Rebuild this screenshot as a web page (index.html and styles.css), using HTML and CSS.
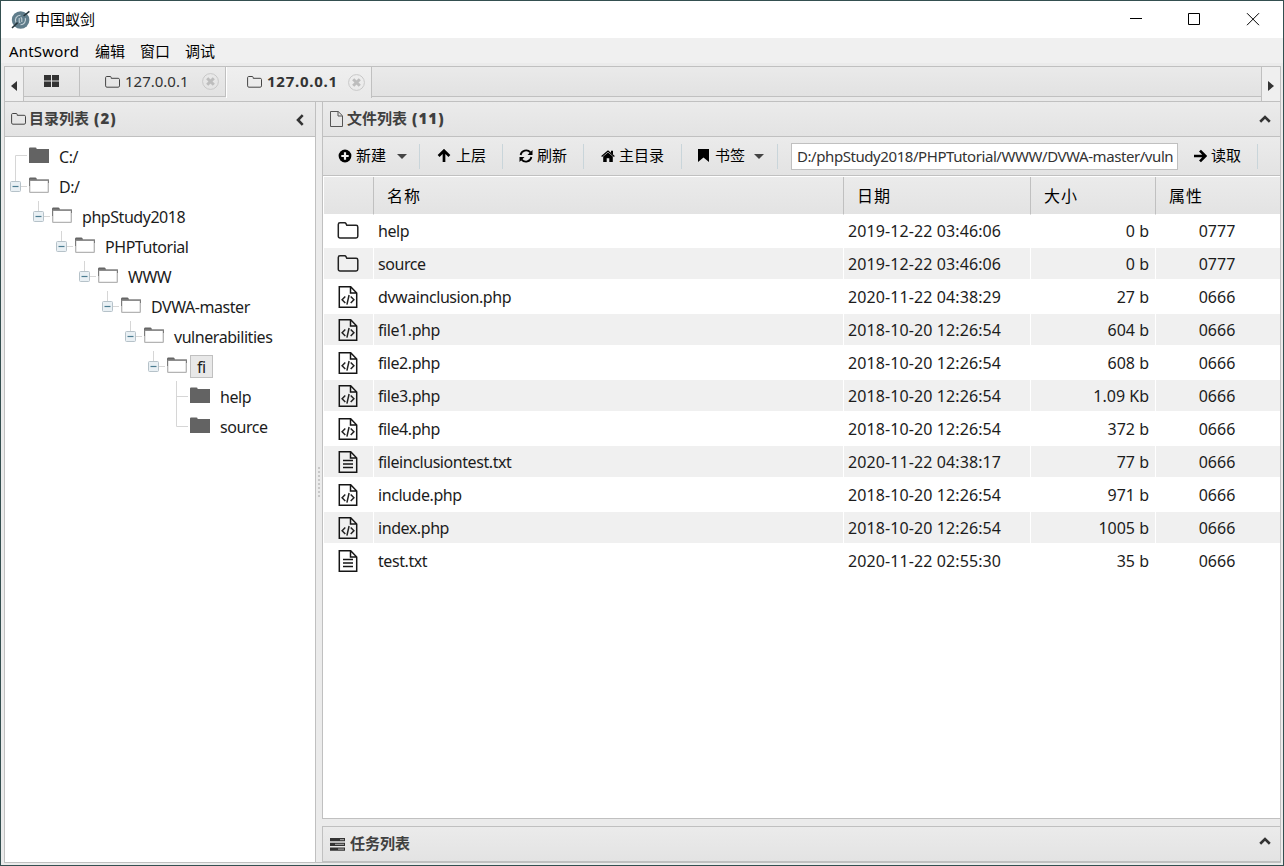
FILE: index.html
```html
<!DOCTYPE html>
<html lang="zh-CN">
<head>
    <meta charset="UTF-8">
    <title>中国蚁剑</title>
    <link rel="stylesheet" href="styles.css">
</head>
<body>

<!-- Icons -->
<svg class="defs">
    <symbol id="i-folder-o" viewBox="0 0 16 14">
        <path d="M1.6 1.5h3.6c.6 0 1 .4 1 1v.8h7c.8 0 1.3.5 1.3 1.3v6.3c0 .8-.5 1.3-1.3 1.3H1.9c-.8 0-1.3-.5-1.3-1.3V2.6c0-.6.4-1.1 1-1.1z" fill="none" stroke="currentColor"/>
    </symbol>
    <symbol id="i-close" viewBox="0 0 17 17">
        <circle cx="8.5" cy="8.5" r="7.9" fill="none" stroke="#c8c8c8"/>
        <path d="M5.2 5.2l6.6 6.6M11.8 5.2l-6.6 6.6" stroke="#bdbdbd" stroke-width="3"/>
    </symbol>
    <symbol id="i-up" viewBox="0 0 12 8">
        <path d="M1.2 6.7L6 2l4.8 4.7" fill="none" stroke="#333" stroke-width="2.6"/>
    </symbol>
    <symbol id="i-arrow" viewBox="0 0 14 14">
        <path d="M1 7h11M7 1.6L12.3 7 7 12.4" fill="none" stroke="currentColor" stroke-width="2.7"/>
    </symbol>
    <symbol id="t-minus" viewBox="0 0 19 30">
        <path d="M5.5 0v10M11 15.5h6" stroke="#d6d6d6" fill="none"/>
        <rect x=".5" y="10.5" width="10" height="10" rx="1" fill="#e9f0f4" stroke="#b6c2c9"/>
        <path d="M2.5 15.5h6" stroke="#4b7c91" stroke-width="1.2"/>
    </symbol>
    <symbol id="t-top" viewBox="0 0 19 30">
        <path d="M17 14.5H5.5V30" stroke="#d6d6d6" fill="none"/>
    </symbol>
    <symbol id="t-mid" viewBox="0 0 19 30">
        <path d="M5.5 0v30M5.5 15.5H17" stroke="#d6d6d6" fill="none"/>
    </symbol>
    <symbol id="t-end" viewBox="0 0 19 30">
        <path d="M5.5 0v15.5H17" stroke="#d6d6d6" fill="none"/>
    </symbol>
    <symbol id="f-closed" viewBox="0 0 20 30">
        <path d="M0 7.5Q0 6.5 1 6.5h5.5q1 0 1.2 1.4H20V22H0z" fill="#636363"/>
    </symbol>
    <symbol id="f-open" viewBox="0 0 20 30">
        <path d="M0 8q0-1.5 1-1.5h5.5q1 0 1.5 1.9H20v2H0z" fill="#666"/>
        <rect x=".7" y="9.4" width="18.6" height="12" rx=".6" fill="#fff" stroke="#b4b4b4" stroke-width="1.3"/>
        <path d="M.5 15V9.2h19V12" fill="none" stroke="#7b7b7b"/>
    </symbol>
    <symbol id="g-folder" viewBox="0 0 22 22">
        <path d="M3 2.7h4.7c.7 0 1 .3 1.3.9l.8 1.7h9.3c1 0 1.7.7 1.7 1.7v9.3c0 1-.7 1.7-1.7 1.7H3c-1 0-1.7-.7-1.7-1.7V4.4c0-1 .7-1.7 1.7-1.7z" fill="none" stroke="#222" stroke-width="1.5"/>
    </symbol>
    <symbol id="g-page" viewBox="0 0 20 22">
        <path d="M1.3.8h11.4L18.7 7v14.2H1.3zM12.5 1v6h6" fill="none" stroke="#151515" stroke-width="1.5"/>
    </symbol>
    <symbol id="g-code" viewBox="0 0 20 22">
        <use href="#g-page"/>
        <path d="M7.3 10.5l-3.2 3.3 3.2 3.3M12.7 10.5l3.2 3.3-3.2 3.3M11.1 9L8.9 18.7" fill="none" stroke="#222" stroke-width="1.5"/>
    </symbol>
    <symbol id="g-text" viewBox="0 0 20 22">
        <use href="#g-page"/>
        <path d="M5 9.6h10M5 13.1h10M5 16.6h10" stroke="#151515" stroke-width="1.5"/>
    </symbol>
</svg>

<div class="window">
    <div class="titlebar">
        <svg class="logo" viewBox="0 0 20 20">
            <circle cx="10.6" cy="10" r="8.8" fill="#607d8b"/>
            <path d="M6 12.6a5 5 0 0 1 4.5-7.4M15.2 8a5 5 0 0 1-4.7 6.8M9.2 8v3.5q0 1 1.2 1M11.8 12V8.7Q11.8 7.6 10.6 7.6" fill="none" stroke="#c3d0d6" stroke-width="1.1"/>
            <path d="M19.4 1.4L13.6 6M7.6 12.6L2 18" stroke="#25343b" stroke-width="1.5" fill="none"/>
        </svg>
        <span class="title">中国蚁剑</span>
        <svg class="win-buttons" width="130" height="20" viewBox="0 0 130 20">
            <path d="M0 9.5h12M58.5 4.5h11v11h-11zM117 4.2l12 12M129 4.2l-12 12" fill="none" stroke="#000"/>
        </svg>
    </div>
    <div class="menu">
        <span class="menu-app">AntSword</span><span>编辑</span><span>窗口</span><span>调试</span>
    </div>

    <div class="app">
        <!-- Tabs -->
        <div class="tabbar">
            <div class="tab-arrow left"><svg width="6" height="10"><path d="M6 0v10L0 5z" fill="#333"/></svg></div>
            <div class="tabs">
                <div class="tab home">
                    <svg width="15" height="12"><path d="M0 0h7v5.4H0zM8 0h7v5.4H8zM0 6.6h7V12H0zM8 6.6h7V12H8z" fill="#333"/></svg>
                </div>
                <div class="tab">
                    <svg class="tab-icon"><use href="#i-folder-o"/></svg><span>127.0.0.1</span>
                    <svg class="tab-close"><use href="#i-close"/></svg>
                </div>
                <div class="tab active">
                    <svg class="tab-icon"><use href="#i-folder-o"/></svg><span>127.0.0.1</span>
                    <svg class="tab-close"><use href="#i-close"/></svg>
                </div>
                <div class="tab-rest"></div>
            </div>
            <div class="tab-arrow right"><svg width="6" height="10"><path d="M0 0v10l6-5z" fill="#333"/></svg></div>
        </div>

        <div class="layout">
            <!-- Directory tree -->
            <div class="panel sidebar">
                <div class="panel-head">
                    <svg class="tab-icon"><use href="#i-folder-o"/></svg>
                    <span>目录列表 <b>(2)</b></span>
                    <svg class="collapse" width="8" height="12"><path d="M6.7 1.2L2 6l4.7 4.8" fill="none" stroke="#333" stroke-width="2.6"/></svg>
                </div>
                <div class="tree">
                    <div class="node"><svg class="line"><use href="#t-top"/></svg><svg class="dir"><use href="#f-closed"/></svg><span>C:/</span></div>
                    <div class="node"><svg class="line"><use href="#t-minus"/></svg><svg class="dir"><use href="#f-open"/></svg><span>D:/</span></div>
                    <div class="branch">
                        <div class="node"><svg class="line"><use href="#t-minus"/></svg><svg class="dir"><use href="#f-open"/></svg><span>phpStudy2018</span></div>
                        <div class="branch">
                            <div class="node"><svg class="line"><use href="#t-minus"/></svg><svg class="dir"><use href="#f-open"/></svg><span>PHPTutorial</span></div>
                            <div class="branch">
                                <div class="node"><svg class="line"><use href="#t-minus"/></svg><svg class="dir"><use href="#f-open"/></svg><span>WWW</span></div>
                                <div class="branch">
                                    <div class="node"><svg class="line"><use href="#t-minus"/></svg><svg class="dir"><use href="#f-open"/></svg><span>DVWA-master</span></div>
                                    <div class="branch">
                                        <div class="node"><svg class="line"><use href="#t-minus"/></svg><svg class="dir"><use href="#f-open"/></svg><span>vulnerabilities</span></div>
                                        <div class="branch">
                                            <div class="node"><svg class="line"><use href="#t-minus"/></svg><svg class="dir"><use href="#f-open"/></svg><span class="selected">fi</span></div>
                                            <div class="branch">
                                                <div class="node"><svg class="line"><use href="#t-mid"/></svg><svg class="dir"><use href="#f-closed"/></svg><span>help</span></div>
                                                <div class="node"><svg class="line"><use href="#t-end"/></svg><svg class="dir"><use href="#f-closed"/></svg><span>source</span></div>
                                            </div>
                                        </div>
                                    </div>
                                </div>
                            </div>
                        </div>
                    </div>
                </div>
            </div>

            <div class="splitter"><div class="grip"></div></div>

            <div class="main">
                <!-- File list -->
                <div class="panel files">
                    <div class="panel-head">
                        <svg class="page-icon" width="13" height="16"><path d="M.5.5h7.7l4.3 4.3v10.7H.5zM8 .5V5h4.5" fill="none" stroke="#555"/></svg>
                        <span>文件列表 <b>(11)</b></span>
                        <svg class="collapse" width="12" height="8"><use href="#i-up"/></svg>
                    </div>
                    <div class="toolbar">
                        <div class="tool new">
                            <svg width="14" height="14"><circle cx="7" cy="7" r="6.4"/><path d="M7 3.3v7.4M3.3 7h7.4" stroke="#eee" stroke-width="2.2"/></svg>
                            <span>新建</span><i class="caret"></i>
                        </div>
                        <div class="tool up">
                            <svg class="rotated" width="14" height="14"><use href="#i-arrow"/></svg><span>上层</span>
                        </div>
                        <div class="tool refresh">
                            <svg width="14" height="14"><path d="M1.6 6A5.6 5.6 0 0 1 11.4 3.4M12.4 8A5.6 5.6 0 0 1 2.6 10.6" fill="none" stroke="#000" stroke-width="1.8"/><path d="M13.5 1v5h-5zM.5 13V8h5z"/></svg><span>刷新</span>
                        </div>
                        <div class="tool home-dir">
                            <svg width="14" height="14"><path d="M7 3.6l4.8 4V13H8.3V9.3H5.7V13H2.2V7.6z"/><path d="M.6 7.4L7 2.1l6.4 5.3" fill="none" stroke="#000" stroke-width="1.3"/><path d="M10 1.7h2v4l-2-1.7z"/></svg><span>主目录</span>
                        </div>
                        <div class="tool mark">
                            <svg width="11" height="13"><path d="M0 0h11v13L5.5 8.5 0 13z"/></svg>
                            <span>书签</span><i class="caret"></i>
                        </div>
                        <div class="path">D:/phpStudy2018/PHPTutorial/WWW/DVWA-master/vuln</div>
                        <div class="tool read">
                            <svg width="14" height="14"><use href="#i-arrow"/></svg><span>读取</span>
                        </div>
                    </div>
                    <table class="grid">
                        <thead>
                            <tr><th class="c-icon"></th><th class="c-name">名称</th><th class="c-date">日期</th><th class="c-size">大小</th><th class="c-attr">属性</th></tr>
                        </thead>
                        <tbody>
                            <tr><td><svg class="fold"><use href="#g-folder"/></svg></td><td>help</td><td>2019-12-22 03:46:06</td><td>0 b</td><td>0777</td></tr>
                            <tr><td><svg class="fold"><use href="#g-folder"/></svg></td><td>source</td><td>2019-12-22 03:46:06</td><td>0 b</td><td>0777</td></tr>
                            <tr><td><svg><use href="#g-code"/></svg></td><td>dvwainclusion.php</td><td>2020-11-22 04:38:29</td><td>27 b</td><td>0666</td></tr>
                            <tr><td><svg><use href="#g-code"/></svg></td><td>file1.php</td><td>2018-10-20 12:26:54</td><td>604 b</td><td>0666</td></tr>
                            <tr><td><svg><use href="#g-code"/></svg></td><td>file2.php</td><td>2018-10-20 12:26:54</td><td>608 b</td><td>0666</td></tr>
                            <tr><td><svg><use href="#g-code"/></svg></td><td>file3.php</td><td>2018-10-20 12:26:54</td><td>1.09 Kb</td><td>0666</td></tr>
                            <tr><td><svg><use href="#g-code"/></svg></td><td>file4.php</td><td>2018-10-20 12:26:54</td><td>372 b</td><td>0666</td></tr>
                            <tr><td><svg><use href="#g-text"/></svg></td><td>fileinclusiontest.txt</td><td>2020-11-22 04:38:17</td><td>77 b</td><td>0666</td></tr>
                            <tr><td><svg><use href="#g-code"/></svg></td><td>include.php</td><td>2018-10-20 12:26:54</td><td>971 b</td><td>0666</td></tr>
                            <tr><td><svg><use href="#g-code"/></svg></td><td>index.php</td><td>2018-10-20 12:26:54</td><td>1005 b</td><td>0666</td></tr>
                            <tr><td><svg><use href="#g-text"/></svg></td><td>test.txt</td><td>2020-11-22 02:55:30</td><td>35 b</td><td>0666</td></tr>
                        </tbody>
                    </table>
                </div>

                <!-- Task list -->
                <div class="panel tasks">
                    <div class="panel-head">
                        <svg class="task-icon" width="15" height="13"><path d="M0 0h15v3.3H0zM0 4.7h15V8H0zM0 9.4h15v3.3H0z" fill="#333"/><path d="M10 1h4v1.3h-4zM5 5.7h9V7H5zM8 10.4h6v1.3H8z" fill="#999"/></svg>
                        <span>任务列表</span>
                        <svg class="collapse" width="12" height="8"><use href="#i-up"/></svg>
                    </div>
                </div>
            </div>
        </div>
    </div>
</div>

</body>
</html>
```
FILE: styles.css
```css
* {
    box-sizing: border-box;
}
body {
    margin: 0;
    font-family: "Noto Sans", "Noto Sans CJK SC", sans-serif;
    font-size: 16px;
    color: #1c1c1c;
}
svg {
    display: block;
    flex: none;
}
.defs {
    display: none;
}
.window {
    display: flex;
    flex-direction: column;
    width: 1284px;
    height: 866px;
    border: 1px solid #344f50;
    background: #ebebeb;
    overflow: hidden;
}

/* Title and menu */
.titlebar {
    display: flex;
    align-items: center;
    height: 37px;
    padding: 0 23px 0 9px;
    background: #fff;
    color: #000;
}
.logo {
    width: 20px;
    height: 20px;
}
.title {
    margin-left: 5px;
    padding-bottom: 2px;
    font-size: 15px;
    font-family: "Noto Sans CJK SC", sans-serif;
}
.win-buttons {
    margin-left: auto;
    margin-bottom: 2px;
}
.menu {
    display: flex;
    gap: 15px;
    height: 25px;
    line-height: 26px;
    padding-left: 8px;
    background: #f0f0f0;
    color: #000;
    font-size: 15px;
}
.menu-app {
    width: 71px;
    letter-spacing: .2px;
}

.app {
    display: flex;
    flex-direction: column;
    flex: 1;
    margin: 3px 2px 2px 3px;
    border: 1px solid #c0c0c0;
}

/* Tabs */
.tabbar {
    display: flex;
    height: 35px;
    border-bottom: 1px solid #c0c0c0;
    background: #e9e9e9;
}
.tab-arrow {
    display: flex;
    align-items: center;
    justify-content: center;
    width: 19px;
    padding-top: 3px;
    background: #efefef;
}
.tab-arrow.left {
    border-right: 1px solid #c0c0c0;
}
.tab-arrow.right {
    border-left: 1px solid #c0c0c0;
}
.tabs {
    display: flex;
    flex: 1;
}
.tab, .tab-rest {
    height: 30px;
    border-bottom: 1px solid #c0c0c0;
    background: linear-gradient(#eaeaea, #e2e2e2);
}
.tab {
    display: flex;
    align-items: center;
    width: 146px;
    padding-left: 25px;
    border-right: 1px solid #c0c0c0;
    color: #333;
    font-size: 15px;
}
.tab-rest {
    flex: 1;
}
.tab.home {
    width: 56px;
    padding: 0 0 1px 20px;
}
.tab.active {
    height: 31px;
    padding-left: 20px;
    padding-bottom: 1px;
    border-bottom: 0;
    border-left: 1px solid #fff;
    background: linear-gradient(#efefef, #e9e9e9);
    font-weight: bold;
}
.tab.active span {
    letter-spacing: .75px;
}
.tab-icon {
    width: 16px;
    height: 14px;
    color: #444;
}
.tab span {
    width: 73px;
    margin-left: 4px;
    padding-bottom: 2px;
}
.tab-close {
    width: 17px;
    height: 17px;
    margin-left: 4px;
}
.tab.active .tab-close {
    margin-left: 8px;
}

/* Panels */
.layout {
    display: flex;
    flex: 1;
}
.panel-head {
    display: flex;
    align-items: center;
    height: 35px;
    padding: 0 9px 1px 5px;
    border-bottom: 1px solid #c0c0c0;
    background: linear-gradient(#ebebeb, #e3e3e3);
    color: #404040;
    font-size: 15px;
    font-weight: bold;
}
.panel-head span {
    margin-left: 4px;
    padding-bottom: 3px;
}
.panel-head b {
    margin-left: 1px;
    letter-spacing: 1.1px;
}
.collapse {
    margin-left: auto;
}
.sidebar {
    width: 311px;
    border-right: 1px solid #c0c0c0;
    background: #fff;
}
.sidebar .panel-head {
    padding-left: 6px;
}
.sidebar .panel-head span {
    margin-left: 2px;
}
.sidebar .collapse {
    margin-right: 2px;
    margin-top: 2px;
}
.splitter {
    display: flex;
    align-items: center;
    justify-content: center;
    width: 6px;
}
.grip {
    width: 2px;
    height: 30px;
    background: repeating-linear-gradient(#c8c8c8 0 2px, #ebebeb 2px 4px);
}
.main {
    display: flex;
    flex-direction: column;
    flex: 1;
    min-width: 0;
}
.files {
    height: 717px;
    border-left: 1px solid #c0c0c0;
    border-bottom: 1px solid #c0c0c0;
    background: #fff;
}
.files .panel-head, .tasks .panel-head {
    padding-left: 7px;
}
.tasks {
    margin-top: 7px;
    border-top: 1px solid #c0c0c0;
    border-left: 1px solid #c0c0c0;
}

/* Tree */
.tree {
    padding: 4px 0 0 5px;
}
.branch {
    padding-left: 23px;
}
.node {
    display: flex;
    align-items: center;
    height: 30px;
}
.line {
    width: 19px;
    height: 30px;
}
.dir {
    width: 20px;
    height: 30px;
}
.node span {
    height: 23px;
    margin-left: 3px;
    padding: 0 5px 0 6px;
    border: 1px solid transparent;
    line-height: 22px;
    letter-spacing: -.45px;
}
.node .selected {
    padding-right: 6px;
    background: #e8e8e8;
    border-color: #c0c0c0;
}

/* Toolbar */
.toolbar {
    display: flex;
    align-items: center;
    height: 39px;
    padding-left: 15px;
    border-bottom: 1px solid #c0c0c0;
    background: linear-gradient(#ebebeb, #e3e3e3);
    color: #000;
    font-size: 15px;
}
.tool {
    display: flex;
    align-items: center;
    height: 25px;
    padding-bottom: 1px;
    border-right: 1px solid #c9d5da;
}
.tool span {
    margin-left: 4px;
    padding-bottom: 3px;
}
.tool.new {
    width: 82px;
}
.tool.up {
    width: 83px;
    padding-left: 17px;
}
.tool.up span {
    margin-left: 5px;
}
.tool.refresh {
    width: 81px;
    padding-left: 16px;
}
.tool.home-dir {
    width: 98px;
    padding-left: 17px;
}
.tool.mark {
    width: 96px;
    padding-left: 16px;
}
.tool.mark span {
    margin-left: 6px;
}
.tool.mark .caret {
    margin-left: 9px;
}
.tool.read {
    width: 80px;
    padding-left: 15px;
}
.rotated {
    transform: rotate(-90deg);
}
.caret {
    margin: 1px 0 0 11px;
    border: 5px solid transparent;
    border-top-color: #444;
    border-bottom: 0;
}
.path {
    width: 387px;
    height: 27px;
    margin: 1px 0 0 13px;
    padding: 0 0 0 5px;
    border: 1px solid #c0c0c0;
    background: #fff;
    color: #333;
    line-height: 25px;
    letter-spacing: -.43px;
    white-space: nowrap;
}

/* File grid */
.grid {
    width: 956px;
    margin: 1px 0 0 1px;
    border-collapse: separate;
    border-spacing: 0;
    table-layout: fixed;
}
.grid th {
    height: 38px;
    padding: 0 0 2px 13px;
    border-right: 1px solid #c0c0c0;
    border-bottom: 1px solid #fff;
    background: linear-gradient(#ebebeb, #e3e3e3);
    color: #000;
    font-weight: normal;
    font-size: 16px;
    letter-spacing: 1px;
    text-align: left;
}
.grid th:last-child {
    border-right: 0;
}
.c-icon {
    width: 50px;
}
.c-name {
    width: 470px;
}
.c-date {
    width: 187px;
}
.c-size {
    width: 125px;
}
.grid td {
    height: 33px;
    padding: 1px 6px 0 4px;
    border-right: 1px solid #fff;
    border-bottom: 2px solid #fff;
    line-height: 30px;
}
.grid tr:nth-child(even) td {
    background: #f0f0f0;
}
.grid td:first-child {
    padding: 0 0 0 14px;
}
.grid td:nth-child(2) {
    letter-spacing: -.43px;
}
.grid td:nth-child(3) {
    letter-spacing: .1px;
}
.grid td:nth-child(4) {
    text-align: right;
}
.grid td:nth-child(5) {
    text-align: center;
    border-right: 0;
}
.grid svg {
    width: 20px;
    height: 22px;
}
.grid .fold {
    width: 22px;
    margin-left: -1px;
}

/* Tasks */
.task-icon {
    margin-top: 1px;
}
.tasks span {
    margin-left: 5px;
}
.tasks .collapse {
    margin-bottom: 6px;
}
```
